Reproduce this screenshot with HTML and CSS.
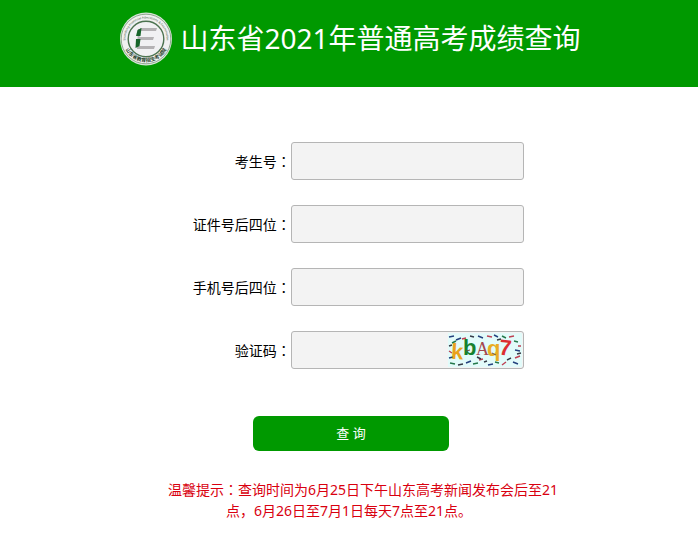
FILE: index.html
```html
<!DOCTYPE html>
<html lang="zh-CN">
<head>
<meta charset="utf-8">
<meta name="viewport" content="width=device-width, initial-scale=1">
<title>山东省2021年普通高考成绩查询</title>
<link rel="stylesheet" href="styles.css">
</head>
<body>
<header class="banner">
  <svg class="logo" viewBox="0 0 52 54" aria-hidden="true">
    <defs>
      <path id="arc-top" d="M7.200 35.500 A20.600 20.600 0 1 1 44.800 35.500"/>
      <path id="arc-bottom" d="M3.800 33 A23 23 0 0 0 48.200 33"/>
    </defs>
    <ellipse cx="26" cy="27" rx="26" ry="26.5" fill="#d9e5d9"/>
    <circle cx="26" cy="27" r="24.8" fill="#f1f1f1" stroke="#6d8d6d" stroke-width=".7"/>
    <circle cx="26" cy="27" r="17.800" fill="#f1f1f3" stroke="#4c7350" stroke-width="1.4"/>
    <text class="logo-latin"><textPath href="#arc-top" startOffset="50%">Shandong Provincial Admissions &amp; Examination</textPath></text>
    <text class="logo-han"><textPath href="#arc-bottom" startOffset="50%">山东省教育招生考试院</textPath></text>
    <g fill="#b4b2b4">
      <path d="M20 16H37l-1 3H20z"/>
      <path d="M18 25H34l-1 3H18z"/>
      <path d="M17 34H35l-1 3H17z"/>
      <path d="M18 17h2l-1 19h-2z"/>
    </g>
    <path d="M17.500 18l4-2-1 8h-4.500zM16 27h4.500l-1 7-4 2z" fill="#17642a"/>
  </svg>
  <h1 class="title">山东省2021年普通高考成绩查询</h1>
</header>
<main class="page">
  <form class="query">
    <div class="row">
      <label for="candidate">考生号<span class="colon" lang="zh-TW">：</span></label>
      <input id="candidate" type="text">
    </div>
    <div class="row">
      <label for="idcard">证件号后四位<span class="colon" lang="zh-TW">：</span></label>
      <input id="idcard" type="text">
    </div>
    <div class="row">
      <label for="phone">手机号后四位<span class="colon" lang="zh-TW">：</span></label>
      <input id="phone" type="text">
    </div>
    <div class="row">
      <label for="code">验证码<span class="colon" lang="zh-TW">：</span></label>
      <div class="code-field">
        <input id="code" type="text">
        <svg class="captcha" viewBox="0 0 74 34">
          <rect width="74" height="34" fill="#e2fbfa"/>
          <g fill="none" stroke-width="1.4">
            <path stroke="#24427e" d="M1 4l5-1M8 7l5-2M30 3l5 2M46 2l4 2M18 30l5-2M40 32l5-1M65 29l5 2M1 25l4-1M67 17l5 1"/>
            <path stroke="#be4154" d="M14 6l4-1M39 3l5 1M61 4l5-1M70 13l3 0M1 18l3 2M31 27l4-1M54 32l4-3M67 25l5-2"/>
            <path stroke="#24784b" d="M4 10l4-2M54 3l4 2M2 30l5 1M25 31l5-1M47 29l4 1M66 8l4 1"/>
            <path stroke="#343b47" d="M22 3l4 1M49 7l4-1M1 13l3-1M29 24l4 2M59 27l4-2M36 29l3-1M69 21l4-1M10 32l5-1"/>
          </g>
          <g class="captcha-text">
            <text x="3" y="26" fill="#eaa21d" transform="rotate(3 9 20)">k</text>
            <text x="15" y="22" fill="#16822e">b</text>
            <text class="captcha-serif" x="28" y="22" fill="#a34850">A</text>
            <text x="39" y="23" fill="#e9ad23">q</text>
            <text x="51" y="22" fill="#dc2f30" transform="rotate(6 56 17)">7</text>
          </g>
          <path fill="none" stroke="#6c5240" d="M18 18l4-1M44 20l4 2"/>
        </svg>
      </div>
    </div>
    <div class="actions">
      <button class="submit" type="submit">查 询</button>
    </div>
  </form>
  <p class="tip">温馨提示<span class="colon" lang="zh-TW">：</span>查询时间为6月25日下午山东高考新闻发布会后至21点，6月26日至7月1日每天7点至21点。</p>
</main>
</body>
</html>
```
FILE: styles.css
```css
* {
  box-sizing: border-box;
}

body {
  margin: 0;
  background: #fff;
  color: #000;
  font: 14px/21px "Noto Sans", "Noto Sans CJK SC", sans-serif;
}

.banner {
  display: flex;
  justify-content: center;
  gap: 8px;
  padding: 12px 0 21px 3px;
  background: #090;
}

.logo {
  flex: none;
  width: 52px;
  height: 54px;
}

.logo-latin {
  fill: #3d5c40;
  font-size: 3px;
  text-anchor: middle;
}

.logo-han {
  fill: #27422b;
  font-size: 5px;
  font-weight: 700;
  text-anchor: middle;
}

.title {
  margin: 0;
  color: #fff;
  font-size: 28px;
  font-weight: 400;
  line-height: 52px;
}

.page {
  padding: 55px 0 12px;
}

.query {
  display: grid;
  gap: 25px;
  max-width: 350px;
  margin: 0 auto;
}

.row {
  display: grid;
  grid-template-columns: 1fr 2fr;
  align-items: center;
}

.row label {
  text-align: right;
  white-space: nowrap;
}

.colon {
  font-family: "Noto Sans CJK TC", sans-serif;
  line-height: 1;
}

.row input {
  display: block;
  width: 100%;
  height: 38px;
  padding: 0 8px;
  border: 1px solid #b5b5b5;
  border-radius: 3px;
  background: #f3f3f3;
  font: inherit;
}

.code-field {
  position: relative;
}

.code-field input {
  padding-right: 80px;
}

.captcha {
  position: absolute;
  top: 2px;
  right: 2px;
  width: 74px;
  height: 34px;
}

.captcha-text {
  font: 700 22px "Liberation Sans", sans-serif;
}

.captcha-serif {
  font: 400 18px "Liberation Serif", serif;
}

.actions {
  padding: 22px 0 0 4px;
  text-align: center;
}

.submit {
  width: 196px;
  height: 35px;
  padding: 0;
  border: 0;
  border-radius: 6px;
  background: #090;
  color: #fff;
  font: 13px/21px "Noto Sans", "Noto Sans CJK SC", sans-serif;
}

.tip {
  max-width: 424px;
  margin: 28px auto 0;
  color: #d9000f;
  text-align: center;
  text-indent: 2em;
}
```
